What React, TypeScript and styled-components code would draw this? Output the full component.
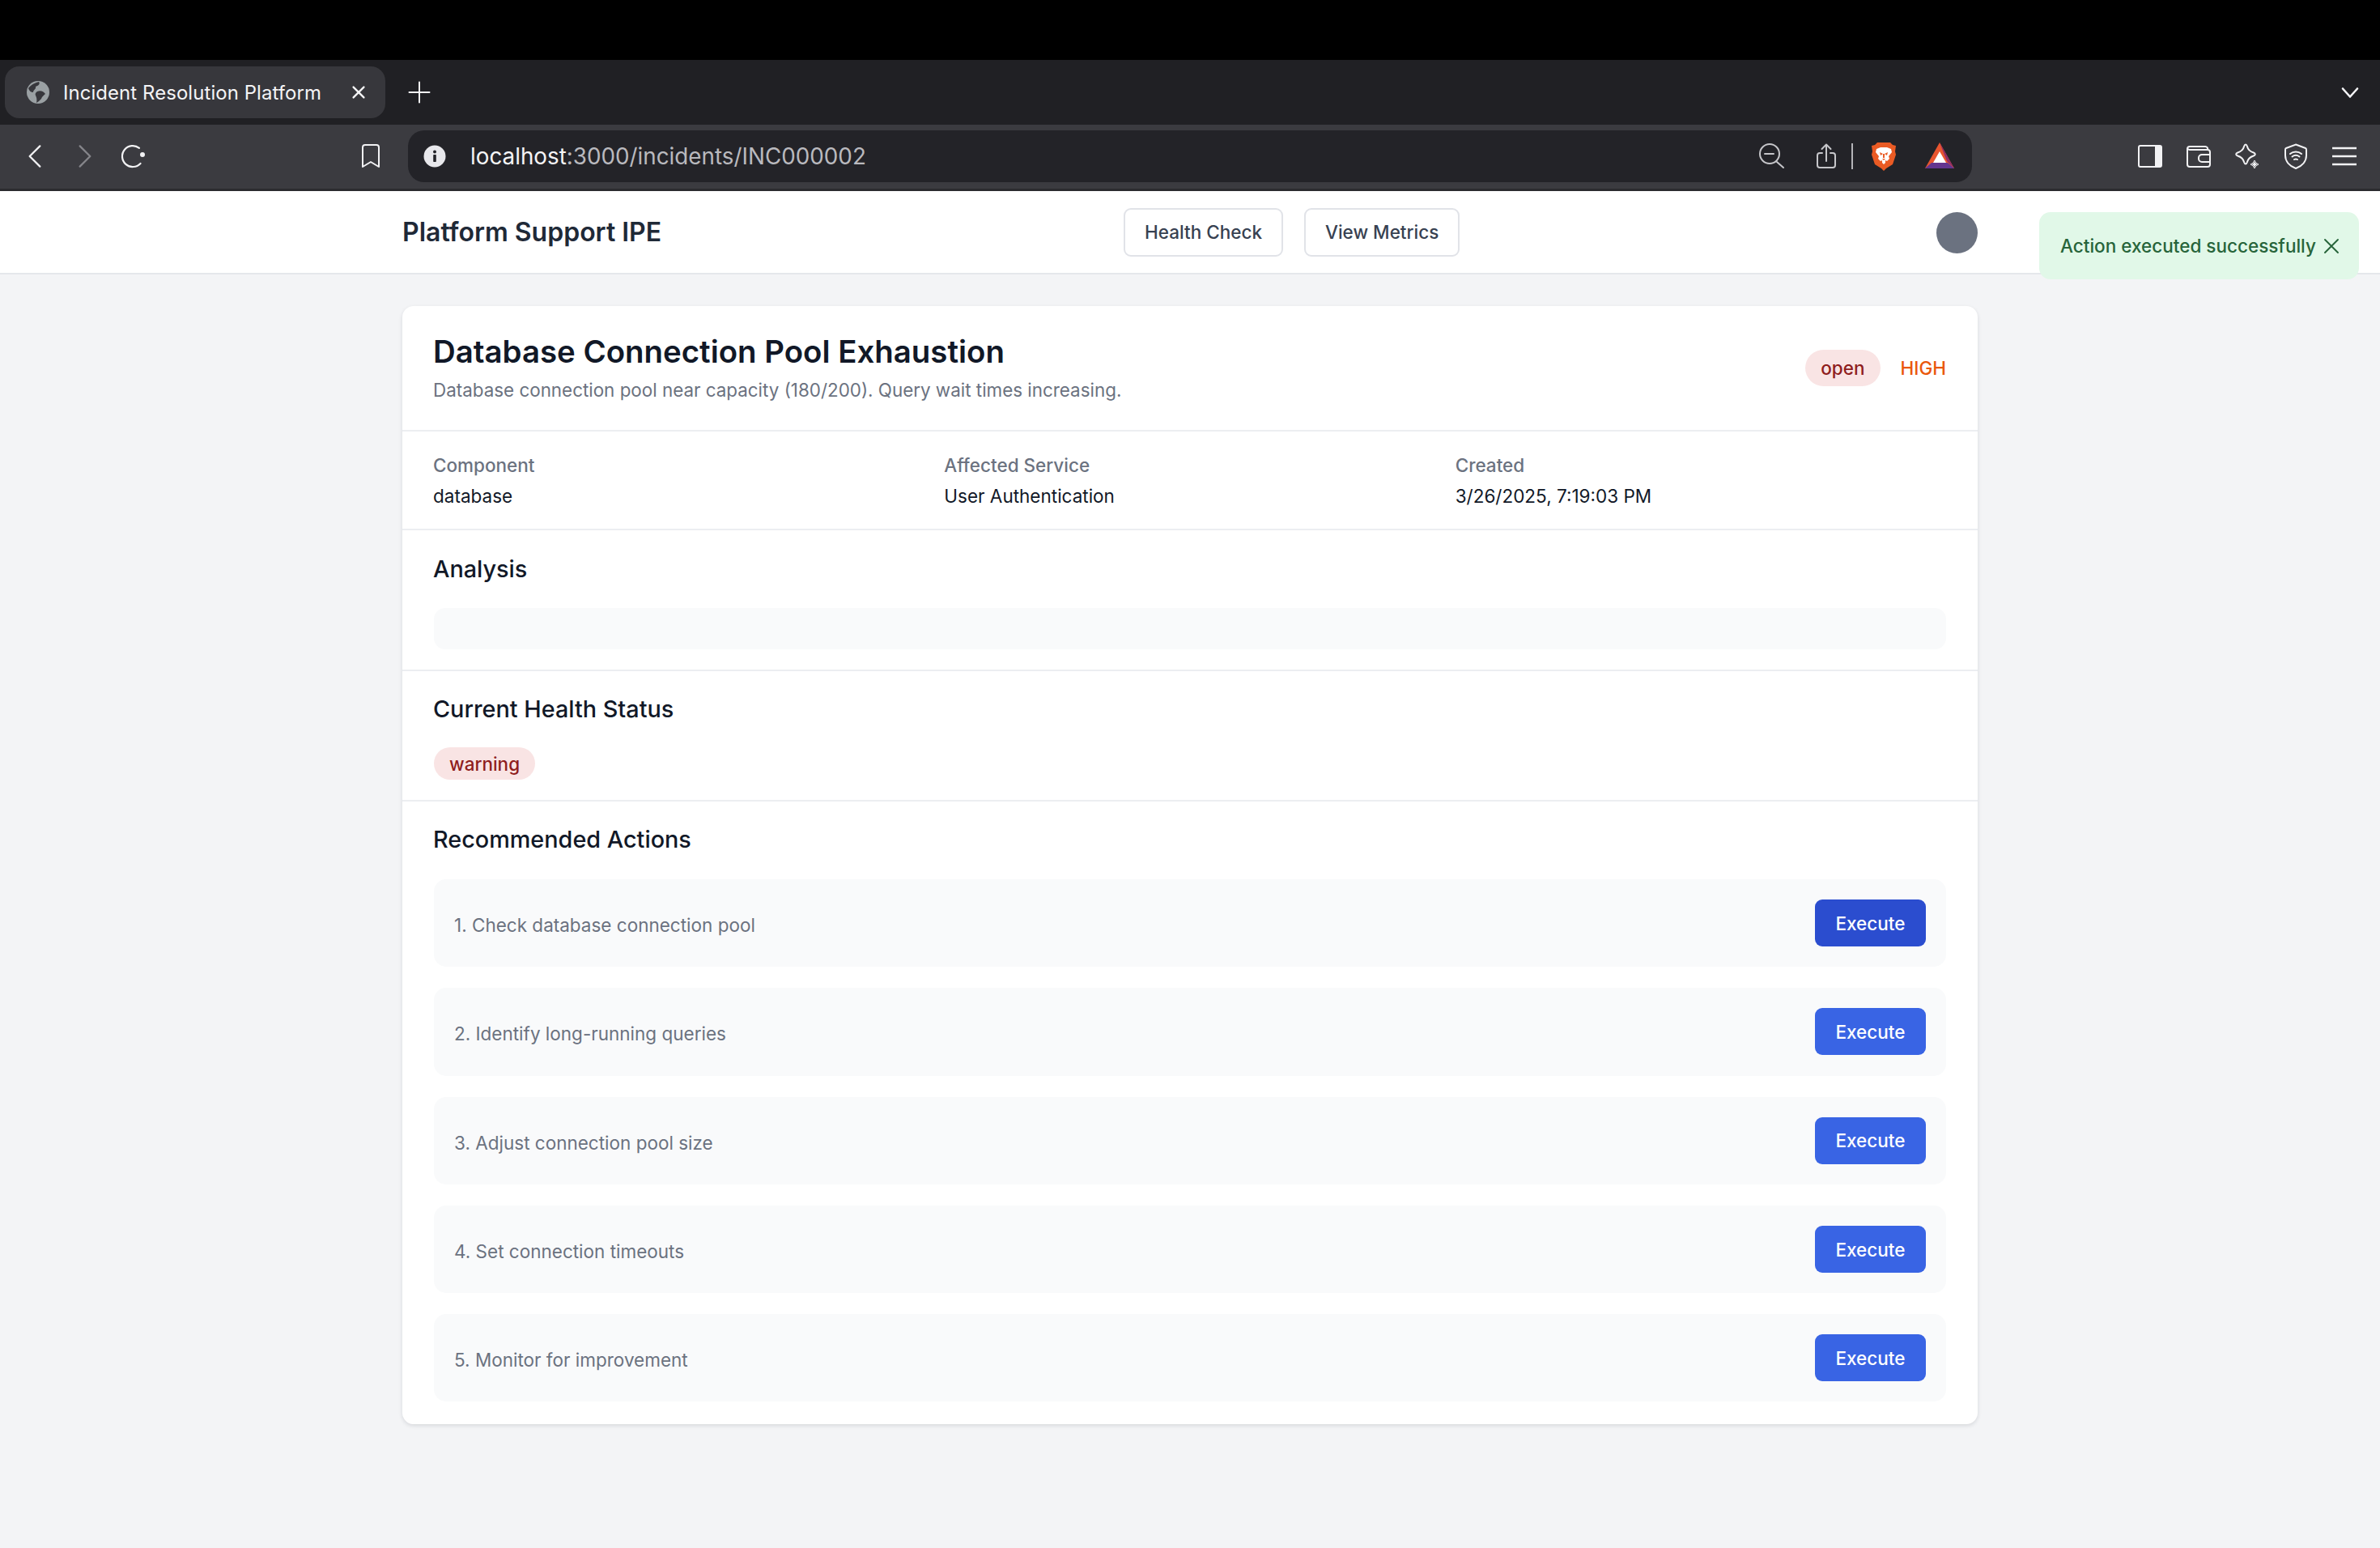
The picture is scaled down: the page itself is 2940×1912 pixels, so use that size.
import React from 'react';
import styled, { createGlobalStyle } from 'styled-components';

const GlobalStyle = createGlobalStyle`
  html, body {
    margin: 0;
    padding: 0;
    background: #f3f4f6;
    font-family: Inter, "Liberation Sans", sans-serif;
  }
  * { box-sizing: border-box; }
`;

const Page = styled.div`
  position: relative;
  width: 2940px;
  height: 1912px;
  overflow: hidden;
  background: #f3f4f6;
`;

// browser chrome
const TopBlack = styled.div`
  height: 74px;
  background: #000;
`;

const TabStrip = styled.div`
  height: 80px;
  padding: 8px 10px 8px 6px;
  display: flex;
  align-items: center;
  background: #202024;
`;

const Tab = styled.div`
  width: 470px;
  height: 64px;
  padding: 0 22px 0 26px;
  display: flex;
  align-items: center;
  border-radius: 18px;
  background: #37373c;
  color: #f4f4f6;
`;

const TabTitle = styled.span`
  flex: 1;
  margin-left: 16px;
  font-size: 23.9px;
  letter-spacing: 0.1px;
  white-space: nowrap;
`;

const NewTab = styled.div`
  width: 30px;
  height: 30px;
  margin-left: 27px;
  color: #f4f4f6;
`;

const TabMenu = styled.div`
  width: 24px;
  height: 24px;
  margin-left: auto;
  margin-right: 15px;
  color: #f4f4f6;
`;

const Toolbar = styled.div`
  height: 82px;
  padding: 8px 14px 10px;
  display: flex;
  align-items: center;
  background: #3b3b40;
  border-bottom: 3px solid #2b2b2f;
`;

const IconSlot = styled.div<{ $dim?: boolean }>`
  width: 60px;
  height: 60px;
  flex: none;
  display: flex;
  align-items: center;
  justify-content: center;
  color: ${(p) => (p.$dim ? '#85858a' : '#f2f2f4')};
`;

const IconGroup = styled.div`
  display: flex;
  flex: none;
`;

const BookmarkSlot = styled(IconSlot)`
  margin-left: 234px;
`;

const UrlBar = styled.div`
  width: 1932px;
  height: 64px;
  flex: none;
  margin-left: 16px;
  padding: 0 22px 0 19px;
  display: flex;
  align-items: center;
  border-radius: 20px;
  background: #232328;
`;

const UrlText = styled.div`
  margin-left: 30px;
  padding-top: 1px;
  font-size: 27.8px;
  color: #b9b9be;
  white-space: nowrap;
`;

const UrlHost = styled.span`
  color: #f4f4f6;
`;

const UrlIcons = styled.div`
  margin-left: auto;
  display: flex;
  align-items: center;
  color: #c6c6ca;
`;

const ZoomIcon = styled.svg`
  margin-right: 36px;
`;

const UrlDivider = styled.div`
  width: 2px;
  height: 32px;
  margin: 0 22px 0 19px;
  background: #b4b4b8;
`;

const RightGroup = styled(IconGroup)`
  margin-left: auto;
`;

// app header
const Header = styled.header`
  height: 103px;
  background: #fff;
  border-bottom: 2px solid #e5e7eb;
`;

const HeaderInner = styled.div`
  width: 1946px;
  height: 100%;
  margin-left: 497px;
  display: flex;
  align-items: center;
`;

const Brand = styled.div`
  width: 891px;
  font-size: 32px;
  font-weight: 600;
  color: #1f2937;
  white-space: nowrap;
`;

const HeaderActions = styled.div`
  display: flex;
  gap: 26px;
`;

const OutlineButton = styled.button`
  height: 60px;
  padding: 0 24px;
  font: 500 22.5px Inter, sans-serif;
  color: #374151;
  background: #fff;
  border: 2px solid #e1e3e8;
  border-radius: 9px;
`;

const Avatar = styled.div`
  width: 51px;
  height: 51px;
  margin: 2px 0 0 auto;
  border-radius: 50%;
  background: #6b7280;
`;

const Toast = styled.div`
  position: absolute;
  top: 262px;
  left: 2519px;
  width: 395px;
  height: 83px;
  padding: 0 22px 0 26px;
  display: flex;
  align-items: center;
  justify-content: space-between;
  border-radius: 14px;
  background: #e1f8e8;
  color: #27643a;
  font-size: 22.5px;
  font-weight: 500;
  white-space: nowrap;
`;

// incident card
const Card = styled.main`
  width: 1946px;
  margin: 39px 0 0 497px;
  border-radius: 14px;
  background: #fff;
  box-shadow: 0 2px 5px rgba(17, 24, 39, 0.12);
`;

const Section = styled.section<{ $height: number; $top: number }>`
  height: ${(p) => p.$height}px;
  padding: ${(p) => p.$top}px 39px 0;
  border-bottom: 2px solid #eceef1;

  &:last-child {
    border-bottom: none;
  }
`;

const TitleRow = styled.div`
  display: flex;
  justify-content: space-between;
  align-items: center;
`;

const Title = styled.h1`
  margin: 0 0 0 -1px;
  font-size: 38.4px;
  line-height: 45px;
  font-weight: 600;
  color: #111827;
`;

const Description = styled.p`
  margin: 7px 0 0 -1px;
  font-size: 22.4px;
  line-height: 36px;
  color: #6b7280;
`;

const TitleMeta = styled.div`
  display: flex;
  align-items: center;
  gap: 25px;
  margin-bottom: 4px;
`;

const Badge = styled.span`
  height: 45px;
  padding: 0 19px;
  display: inline-flex;
  align-items: center;
  border-radius: 23px;
  background: #f9e4e4;
  color: #8f1d1d;
  font-size: 22.5px;
  font-weight: 500;
`;

const HealthBadge = styled(Badge)`
  height: 40px;
  margin-top: 25px;
`;

const Severity = styled.span`
  font-size: 22.5px;
  font-weight: 500;
  color: #ea580c;
`;

const MetaGrid = styled.div`
  margin-left: -1px;
  display: grid;
  grid-template-columns: repeat(3, 1fr);
  column-gap: 25px;
`;

const MetaLabel = styled.div`
  font-size: 22.5px;
  line-height: 36px;
  font-weight: 500;
  color: #6b7280;
`;

const MetaValue = styled.div`
  margin-top: 2px;
  font-size: 22.5px;
  line-height: 36px;
  font-weight: 400;
  color: #111827;
`;

const SectionTitle = styled.h2`
  margin: 0 0 0 -1px;
  font-size: 28.8px;
  line-height: 45px;
  font-weight: 500;
  color: #111827;
`;

const AnalysisBox = styled.div`
  height: 51px;
  margin-top: 26px;
  border-radius: 14px;
  background: #f9fafb;
`;

const ActionList = styled.div`
  margin-top: 27px;
  display: flex;
  flex-direction: column;
  gap: 26px;
`;

const ActionRow = styled.div`
  height: 108.3px;
  padding: 0 25px;
  display: flex;
  align-items: center;
  justify-content: space-between;
  border-radius: 15px;
  background: #f9fafb;
`;

const ActionText = styled.span`
  padding-top: 5px;
  font-size: 22.5px;
  color: #6b7280;
`;

const ExecuteButton = styled.button<{ $active?: boolean }>`
  width: 137px;
  height: 58px;
  border: none;
  border-radius: 9px;
  background: ${(p) => (p.$active ? '#2b4dcf' : '#3964e4')};
  color: #fff;
  font: 500 22.5px Inter, sans-serif;
`;

const FlatIcon = styled.svg`
  flex: none;
`;

const BatLogo = styled.svg`
  flex: none;
  margin-left: 35px;
`;

// icons, drawn to match the browser chrome
const Glyph = ({ size, children, w = 1.6 }: { size: number; children: React.ReactNode; w?: number }) => (
  <svg width={size} height={size} viewBox="0 0 24 24" fill="none" stroke="currentColor" strokeWidth={w} strokeLinecap="round" strokeLinejoin="round">
    {children}
  </svg>
);

const GlobeIcon = () => (
  <FlatIcon width="30" height="30" viewBox="0 0 30 30">
    <circle cx="15" cy="15" r="14" fill="#9aa0a3" />
    <path d="M3 10 C7 5 12 3 16 2 C18 5 15 7 12 8 C13 11 9 12 9 15 C6 15 4 13 3 10Z" fill="#37373c" />
    <path d="M14 14 C18 12 22 14 24 17 C22 19 20 20 19 23 C17 25 15 27 13 28 C14 24 13 21 12 19 C11 17 12 15 14 14Z" fill="#37373c" />
  </FlatIcon>
);

const CloseIcon = ({ size }: { size: number }) => (
  <Glyph size={size} w={2.6}>
    <path d="M5 5l14 14M19 5L5 19" />
  </Glyph>
);

const InfoIcon = () => (
  <FlatIcon width="28" height="28" viewBox="0 0 28 28">
    <circle cx="14" cy="14" r="13.5" fill="#e8e8ec" />
    <rect x="12.2" y="12" width="3.6" height="9" rx="0.8" fill="#232328" />
    <circle cx="14" cy="8.4" r="2" fill="#232328" />
  </FlatIcon>
);

const BraveIcon = () => (
  <FlatIcon width="32" height="36" viewBox="0 0 32 36">
    <path d="M8 1h16l3 3 4 1-1 7 1 4-4 12-8 5-3 3-3-3-8-5L1 16l1-4-1-7 4-1z" fill="#ea5b24" />
    <path d="M7 9l5-2h8l5 2 1 4-4 5 1 3-3 3-2-1v3l-2 2-2-2v-3l-2 1-3-3 1-3-4-5z" fill="#fff" />
    <path d="M11 13l4 2-3 2zM21 13l-4 2 3 2zM14 21h4l-2 2zM15 15h2v5h-2z" fill="#ea5b24" />
  </FlatIcon>
);

const BatIcon = () => (
  <BatLogo width="36" height="33" viewBox="0 0 36 33">
    <polygon points="18,0 36,32 0,32" fill="#e8552f" />
    <polygon points="18,0 36,32 27,23" fill="#8e2c68" />
    <polygon points="0,32 36,32 28,25 8,25" fill="#63358f" />
    <polygon points="18,11 26,25 10,25" fill="#fff" />
  </BatLogo>
);

const PanelIcon = () => (
  <svg width="30" height="28" viewBox="0 0 30 28" fill="none">
    <rect x="1" y="1" width="28" height="26" rx="2" stroke="#f2f2f4" strokeWidth="2" />
    <path d="M21 1h6a2 2 0 0 1 2 2v22a2 2 0 0 1-2 2h-6z" fill="#f2f2f4" />
  </svg>
);

const WalletIcon = () => (
  <svg width="30" height="28" viewBox="0 0 30 28" fill="none" stroke="currentColor" strokeWidth="2" strokeLinejoin="round">
    <path d="M1 7V5a3 3 0 0 1 3-3h19a3 3 0 0 1 3 4" />
    <path d="M1 6v18a3 3 0 0 0 3 3h22a3 3 0 0 0 3-3V9a3 3 0 0 0-3-3H4a3 3 0 0 1-3-2" />
    <path d="M29 12H19a4 4 0 0 0-4 4v1a4 4 0 0 0 4 4h10" />
  </svg>
);

const SparkleIcon = () => (
  <svg width="32" height="32" viewBox="0 0 32 32" fill="none">
    <path d="M14 1.5c1 0 1.4.8 1.8 2 1 4 3.4 6.600 8 8 1.400.4 2 1 2 2s-.6 1.600-2 2c-4.600 1.400-7 4-8 8-.4 1.200-.8 2-1.800 2s-1.400-.8-1.800-2c-1-4-3.400-6.600-8-8-1.400-.4-2-1-2-2s.6-1.600 2-2c4.600-1.400 7-4 8-8 .4-1.200.8-2 1.800-2z" stroke="currentColor" strokeWidth="2" />
    <path d="M25 21l1.800 3.200L30 26l-3.200 1.800L25 31l-1.800-3.200L20 26l3.200-1.800z" fill="#3b3b40" stroke="currentColor" strokeWidth="1" />
    <path d="M25 22.500l1.300 2.200 2.200 1.300-2.200 1.300-1.300 2.200-1.300-2.200-2.200-1.300 2.200-1.300z" fill="currentColor" />
  </svg>
);

const ShieldIcon = () => (
  <svg width="28" height="32" viewBox="0 0 28 32" fill="none" stroke="currentColor" strokeWidth="2" strokeLinecap="round">
    <path d="M14 1.500L26 6c1 .4 1 1 1 2v7c0 7-5 13-13 16C6 28 1 22 1 15V8c0-1 0-1.600 1-2z" />
    <path d="M7 13c4-3.500 10-3.500 14 0M9.500 16.500c3-2.200 6-2.200 9 0M12 20c1.400-.8 2.600-.8 4 0" />
  </svg>
);

const MenuIcon = () => (
  <svg width="30" height="24" viewBox="0 0 30 24" stroke="currentColor" strokeWidth="2.500">
    <path d="M0 2h30M0 12h30M0 22h30" />
  </svg>
);

const actions = [
  '1. Check database connection pool',
  '2. Identify long-running queries',
  '3. Adjust connection pool size',
  '4. Set connection timeouts',
  '5. Monitor for improvement',
];

const App = () => {
  return (
    <Page>
      <GlobalStyle />
      <TopBlack />
      <TabStrip>
        <Tab>
          <GlobeIcon />
          <TabTitle>Incident Resolution Platform</TabTitle>
          <CloseIcon size={22} />
        </Tab>
        <NewTab>
          <Glyph size={30} w={1.6}>
            <path d="M12 2v20M2 12h20" />
          </Glyph>
        </NewTab>
        <TabMenu>
          <Glyph size={24} w={2.6}>
            <path d="M3 7.500l9 10 9-10" />
          </Glyph>
        </TabMenu>
      </TabStrip>
      <Toolbar>
        <IconGroup>
          <IconSlot>
            <Glyph size={32} w={1.7}>
              <path d="M16 2.500L6.500 12l9.500 9.500" />
            </Glyph>
          </IconSlot>
          <IconSlot $dim>
            <Glyph size={32} w={1.7}>
              <path d="M8 2.500l9.500 9.500L8 21.500" />
            </Glyph>
          </IconSlot>
          <IconSlot>
            <svg width="32" height="32" viewBox="0 0 32 32" fill="none" stroke="currentColor" strokeWidth="2.200" strokeLinecap="round">
              <path d="M24 5.800A13 13 0 1 0 25.500 24.900" />
              <circle cx="28" cy="14" r="3" fill="currentColor" stroke="none" />
            </svg>
          </IconSlot>
        </IconGroup>
        <BookmarkSlot>
          <svg width="24" height="30" viewBox="0 0 24 30" fill="none" stroke="currentColor" strokeWidth="2" strokeLinejoin="round">
            <path d="M2 4a3 3 0 0 1 3-3h14a3 3 0 0 1 3 3v24l-10-6-10 6z" />
          </svg>
        </BookmarkSlot>
        <UrlBar>
          <InfoIcon />
          <UrlText>
            <UrlHost>localhost</UrlHost>:3000/incidents/INC000002
          </UrlText>
          <UrlIcons>
            <ZoomIcon width="36" height="32" viewBox="0 0 36 32" fill="none" stroke="currentColor" strokeWidth="2" strokeLinecap="round">
              <circle cx="14" cy="13" r="12" />
              <path d="M8 13h11M23 23l8 7" />
            </ZoomIcon>
            <svg width="24" height="32" viewBox="0 0 24 32" fill="none" stroke="currentColor" strokeWidth="2" strokeLinecap="round" strokeLinejoin="round">
              <path d="M7 12H4a3 3 0 0 0-3 3v12a3 3 0 0 0 3 3h16a3 3 0 0 0 3-3V15a3 3 0 0 0-3-3h-3" />
              <path d="M12 22V2M6.500 7L12 1.500 17.500 7" />
            </svg>
            <UrlDivider />
            <BraveIcon />
            <BatIcon />
          </UrlIcons>
        </UrlBar>
        <RightGroup>
          <IconSlot><PanelIcon /></IconSlot>
          <IconSlot><WalletIcon /></IconSlot>
          <IconSlot><SparkleIcon /></IconSlot>
          <IconSlot><ShieldIcon /></IconSlot>
          <IconSlot><MenuIcon /></IconSlot>
        </RightGroup>
      </Toolbar>

      <Header>
        <HeaderInner>
          <Brand>Platform Support IPE</Brand>
          <HeaderActions>
            <OutlineButton>Health Check</OutlineButton>
            <OutlineButton>View Metrics</OutlineButton>
          </HeaderActions>
          <Avatar />
        </HeaderInner>
      </Header>
      <Toast>
        <span>Action executed successfully</span>
        <Glyph size={24} w={1.9}>
          <path d="M4 4l16 16M20 4L4 20" />
        </Glyph>
      </Toast>

      <Card>
        <Section $height={155} $top={34}>
          <TitleRow>
            <div>
              <Title>Database Connection Pool Exhaustion</Title>
              <Description>Database connection pool near capacity (180/200). Query wait times increasing.</Description>
            </div>
            <TitleMeta>
              <Badge>open</Badge>
              <Severity>HIGH</Severity>
            </TitleMeta>
          </TitleRow>
        </Section>
        <Section $height={122} $top={24}>
          <MetaGrid>
            <div>
              <MetaLabel>Component</MetaLabel>
              <MetaValue>database</MetaValue>
            </div>
            <div>
              <MetaLabel>Affected Service</MetaLabel>
              <MetaValue>User Authentication</MetaValue>
            </div>
            <div>
              <MetaLabel>Created</MetaLabel>
              <MetaValue>3/26/2025, 7:19:03 PM</MetaValue>
            </div>
          </MetaGrid>
        </Section>
        <Section $height={174} $top={25}>
          <SectionTitle>Analysis</SectionTitle>
          <AnalysisBox />
        </Section>
        <Section $height={161} $top={24}>
          <SectionTitle>Current Health Status</SectionTitle>
          <HealthBadge>warning</HealthBadge>
        </Section>
        <Section $height={769} $top={24}>
          <SectionTitle>Recommended Actions</SectionTitle>
          <ActionList>
            {actions.map((action, i) => (
              <ActionRow key={action}>
                <ActionText>{action}</ActionText>
                <ExecuteButton $active={i === 0}>Execute</ExecuteButton>
              </ActionRow>
            ))}
          </ActionList>
        </Section>
      </Card>
    </Page>
  );
};

export default App;
